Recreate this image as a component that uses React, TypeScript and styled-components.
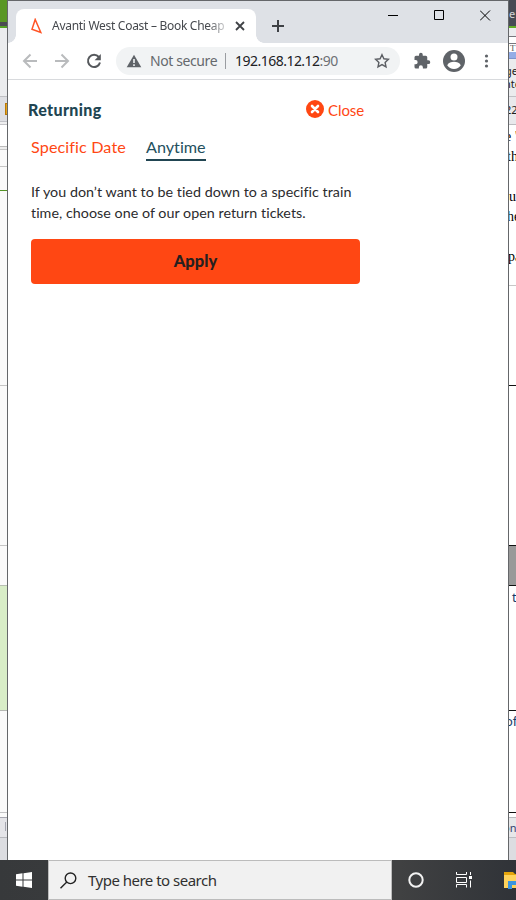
import React from "react";
import styled, { createGlobalStyle } from "styled-components";

const GlobalStyle = createGlobalStyle`
  *, *::before, *::after { box-sizing: border-box; }
  body { margin: 0; overflow: hidden; background: #fff; }
  button { border: 0; padding: 0; background: none; font: inherit; color: inherit; }
  svg { display: block; flex: none; }
`;

const ui = `"Noto Sans", "Open Sans", sans-serif`;
const brand = `Lato, sans-serif`;

const Screen = styled.div`
  width: 516px;
  height: 900px;
  display: flex;
  flex-direction: column;
  overflow: hidden;
`;

const Desktop = styled.div`
  display: grid;
  grid-template-columns: 7px 502px 7px;
  height: 860px;
`;

const Strip = styled.div`
  display: flex;
  flex-direction: column;
  overflow: hidden;
`;

const Band = styled.div<{ $h: number; $bg: string; $line?: string }>`
  flex: none;
  height: ${(p) => p.$h}px;
  background: ${(p) => p.$bg};
  border-bottom: ${(p) => (p.$line ? `1px solid ${p.$line}` : "0")};
  overflow: hidden;
`;

const Scrap = styled.div<{
  $top: number;
  $left: number;
  $size?: number;
  $serif?: boolean;
  $color?: string;
}>`
  height: 12px;
  margin-top: ${(p) => p.$top}px;
  margin-left: ${(p) => p.$left}px;
  font: ${(p) => p.$size ?? 11}px / 12px ${(p) => (p.$serif ? `"Liberation Serif", serif` : ui)};
  color: ${(p) => p.$color ?? "#222"};
  white-space: nowrap;
`;

const FolderTab = styled.div`
  width: 3px;
  height: 12px;
  margin: 6px 0 0 5px;
  background: #e6a51c;
  border: 1px solid #b97908;
  border-right: 0;
`;

const StatusTick = styled.div`
  width: 1px;
  height: 9px;
  margin: 4px 0 0 5px;
  background: #a5a6b0;
`;

const Window = styled.div`
  border: 1px solid #65676a;
  border-bottom: 0;
  background: #fff;
  display: flex;
  flex-direction: column;
`;

const TitleBar = styled.div`
  height: 42px;
  background: #dee1e6;
  display: flex;
  padding-left: 8px;
`;

const Tab = styled.div`
  position: relative;
  width: 240px;
  height: 34px;
  margin-top: 8px;
  border-radius: 8px 8px 0 0;
  background: #fff;
  display: flex;
  align-items: center;
  padding: 0 10px 0 15px;

  &::before,
  &::after {
    content: "";
    position: absolute;
    bottom: 0;
    width: 8px;
    height: 8px;
  }
  &::before {
    left: -8px;
    background: radial-gradient(circle at 0 0, transparent 7.5px, #fff 8px);
  }
  &::after {
    right: -8px;
    background: radial-gradient(circle at 100% 0, transparent 7.5px, #fff 8px);
  }
`;

const TabTitle = styled.div`
  width: 173px;
  margin-left: 9px;
  margin-right: 10px;
  overflow: hidden;
  white-space: nowrap;
  font: 12px/20px ${ui};
  letter-spacing: -0.29px;
  color: #45484d;
  mask-image: linear-gradient(90deg, #000 156px, rgba(0, 0, 0, 0.2) 174px);
`;

const NewTab = styled.button`
  width: 12px;
  height: 12px;
  margin: 19px 0 0 16px;
`;

const Controls = styled.div`
  display: flex;
  gap: 35px;
  margin: 9px 0 0 104px;
`;

const Toolbar = styled.div`
  height: 37px;
  border-bottom: 1px solid #d8dadd;
  display: flex;
  align-items: center;
  padding: 0 14px;
`;

const NavButtons = styled.div`
  display: flex;
  gap: 16px;
  margin-right: 13px;
`;

const Address = styled.div`
  width: 284px;
  height: 28px;
  border-radius: 14px;
  background: #f1f3f4;
  display: flex;
  align-items: center;
  padding: 0 10px;
  font: 14px/28px ${ui};
`;

const NotSecure = styled.span`
  width: 75px;
  margin-left: 8px;
  color: #66696d;
  letter-spacing: -0.4px;
  white-space: nowrap;
`;

const Divider = styled.span`
  width: 1px;
  height: 16px;
  background: #9a9da1;
`;

const Url = styled.span`
  width: 139px;
  margin-left: 9px;
  color: #202124;
  letter-spacing: -0.52px;
`;

const Port = styled.span`
  color: #6d7074;
`;

const ToolbarActions = styled.div`
  display: flex;
  align-items: center;
  gap: 12px;
  margin-left: 13px;
`;

const Page = styled.main`
  width: 375px;
  padding: 19px 19px 0 20px;
  font-family: ${brand};
  font-variant-ligatures: none;
`;

const PageHeader = styled.header`
  display: flex;
  justify-content: space-between;
  height: 22px;
`;

const Heading = styled.h1`
  margin: 0;
  font-weight: 900;
  font-size: 16px;
  line-height: 22px;
  letter-spacing: 0.36px;
  color: #214552;
`;

const CloseButton = styled.button`
  display: flex;
  gap: 4px;
  height: 20px;
  margin-top: 1px;
  color: #ff4713;
  font-family: ${brand};
  font-size: 15px;
  letter-spacing: -0.1px;
  line-height: 20px;
`;

const Tabs = styled.nav`
  display: flex;
  gap: 19px;
  margin: 15px 0 0 3px;
`;

const TabLink = styled.button<{ $active?: boolean; $w: number }>`
  width: ${(p) => p.$w}px;
  height: 25px;
  font-family: ${brand};
  font-size: 16.2px;
  line-height: 21px;
  display: flex;
  align-items: flex-start;
  letter-spacing: ${(p) => (p.$active ? 0 : 0.1)}px;
  white-space: nowrap;
  color: ${(p) => (p.$active ? "#24505e" : "#ff4713")};
  border-bottom: ${(p) => (p.$active ? "2px solid #214552" : "0")};
`;

const Copy = styled.p`
  margin: 20px 0 0 3px;
  font-size: 14.3px;
  line-height: 21px;
  color: #2b2b2d;
  white-space: nowrap;
`;

const Line = styled.span`
  display: block;
  letter-spacing: 0.025px;
`;

const Apply = styled.button`
  width: 329px;
  height: 45px;
  margin: 16px 0 0 3px;
  border-radius: 4px;
  background: #ff4713;
  color: #25201f;
  font: 900 16.5px/45px ${brand};
`;

const Taskbar = styled.div`
  height: 40px;
  background: linear-gradient(90deg, #37393b 0, #404142 400px, #303338 516px);
  display: flex;
  overflow: hidden;
`;

const StartButton = styled.button`
  flex: none;
  width: 48px;
  height: 40px;
  display: grid;
  place-items: center;
`;

const Search = styled.div`
  flex: none;
  width: 344px;
  height: 40px;
  border: 1px solid #bcbcbc;
  background: #f1f1f1;
  display: flex;
  align-items: center;
  gap: 11px;
  padding-left: 11px;
  font: 15px/38px ${ui};
  letter-spacing: -0.51px;
  color: #303030;
`;

const TaskIcons = styled.div`
  flex: none;
  display: flex;
  align-items: center;
  margin-left: 16px;
`;

type BandData = [number, string, string?, React.ReactNode?];

const leftBands: BandData[] = [
  [22, "#599724"],
  [4, "#4b4c51"],
  [2, "#54a225"],
  [69, "#ebecee", "#bfc0c4"],
  [25, "#dedfe3", "#c1c2c8", <FolderTab key="f" />],
  [3, "#eeeeef", "#c4c4c8"],
  [22, "#fff", "#bbb"],
  [3, "#eee", "#c7c7c7"],
  [17, "#fafafa", "#c5c5c5"],
  [24, "#fafafa", "#549326"],
  [195, "#fafafa", "#c5c5c5"],
  [160, "#fafafa", "#c5c5c5"],
  [40, "#fafafa", "#b8bfb3"],
  [125, "#d8edc7", "#b5b8b3"],
  [102, "#fafafa", "#c2c2c4"],
  [5, "#fafafa", "#a7a7b1"],
  [20, "#e4e4e8", "#b7b8bd", <StatusTick key="s" />],
  [22, "#dcdde1"],
];

const rightBands: BandData[] = [
  [26, "#474b54", undefined, <Scrap key="a" $top={8} $left={0} $color="#d3d4d7">e</Scrap>],
  [2, "#62ad26"],
  [9, "#ebecee", "#77777d"],
  [7, "#fff", "#77777d"],
  [8, "#fff", undefined, <Scrap key="b" $top={-2} $left={1} $size={9} $serif $color="#555">T</Scrap>],
  [7, "#94ade6", "#7d94cd"],
  [
    38,
    "#ebecee",
    "#bfc0c4",
    <React.Fragment key="c">
      <Scrap $top={6} $left={-4}>ge</Scrap>
      <Scrap $top={1} $left={-5}>nte</Scrap>
    </React.Fragment>,
  ],
  [28, "#e9e9ec", "#bcbcc0", <Scrap key="d" $top={7} $left={-4}>22</Scrap>],
  [
    161,
    "#fff",
    "#c7c7c7",
    <React.Fragment key="e">
      <Scrap $top={6} $left={-4} $size={14} $serif $color="#000">e "</Scrap>
      <Scrap $top={8} $left={-2} $size={14} $serif $color="#000">th</Scrap>
      <Scrap $top={28} $left={0} $size={14} $serif $color="#000">u</Scrap>
      <Scrap $top={8} $left={-2} $size={14} $serif $color="#000">he</Scrap>
      <Scrap $top={28} $left={-1} $size={14} $serif $color="#000">pa</Scrap>
    </React.Fragment>,
  ],
  [100, "#fff", "#111"],
  [160, "#fff", "#111"],
  [40, "#999", "#111"],
  [125, "#fff", "#111", <Scrap key="g" $top={5} $left={3} $size={13} $color="#143c6b">t</Scrap>],
  [102, "#fff", "#111", <Scrap key="h" $top={4} $left={-4} $size={13} $color="#143c6b">of</Scrap>],
  [5, "#fff", "#b9b9bd"],
  [20, "#e7e7e9", "#bdbdc2", <Scrap key="i" $top={4} $left={-6} $color="#34406d">on</Scrap>],
  [22, "#dcdde1"],
];

const renderBands = (bands: BandData[]) =>
  bands.map(([h, bg, line, content], i) => (
    <Band key={i} $h={h} $bg={bg} $line={line}>
      {content}
    </Band>
  ));

export default function App() {
  return (
    <Screen>
      <GlobalStyle />
      <Desktop>
        <Strip>{renderBands(leftBands)}</Strip>
        <Window>
          <TitleBar>
            <Tab>
              <svg width="12" height="16" viewBox="0 0 12 16" fill="none" stroke="#ff5426" strokeWidth="1.5">
                <path d="M4.200 1.500 9.800 14.500 1 11.300Z" />
              </svg>
              <TabTitle>Avanti West Coast – Book Cheap</TabTitle>
              <svg width="10" height="10" viewBox="0 0 10 10" stroke="#3f4246" strokeWidth="1.8">
                <path d="m1 1 8 8M9 1 1 9" />
              </svg>
            </Tab>
            <NewTab aria-label="New tab">
              <svg width="12" height="12" viewBox="0 0 12 12" stroke="#3e4145" strokeWidth="2">
                <path d="M6 0v12M0 6h12" />
              </svg>
            </NewTab>
            <Controls>
              <svg width="11" height="11" viewBox="0 0 11 11" stroke="#000"><path d="M0 5.500h10" /></svg>
              <svg width="11" height="11" viewBox="0 0 11 11" fill="none" stroke="#000"><path d="M.5.5h9v9h-9Z" /></svg>
              <svg width="11" height="11" viewBox="0 0 11 11" stroke="#000"><path d="m0 .5 10 10M10 .5l-10 10" /></svg>
            </Controls>
          </TitleBar>
          <Toolbar>
            <NavButtons>
              <svg width="16" height="16" viewBox="0 0 16 16" fill="none" stroke="#b9bbbd" strokeWidth="2">
                <path d="M15 8H2M8.500 1.500 2 8l6.500 6.500" />
              </svg>
              <svg width="16" height="16" viewBox="0 0 16 16" fill="none" stroke="#b9bbbd" strokeWidth="2">
                <path d="M1 8h13M7.500 1.500 14 8l-6.500 6.500" />
              </svg>
              <svg width="17" height="16" viewBox="0 0 17 16" fill="none">
                <path d="M12.800 4A6.100 6.100 0 1 0 14 9.500" stroke="#55585c" strokeWidth="2" />
                <path d="M14.800 1v6.200H8.600Z" fill="#55585c" />
              </svg>
            </NavButtons>
            <Address>
              <svg width="16" height="14" viewBox="0 0 16 14">
                <path d="M8 .7 15.300 13.300H.7Z" fill="#5f6368" />
                <path d="M8 5v4M8 10.200v1.700" stroke="#f1f3f4" strokeWidth="1.600" />
              </svg>
              <NotSecure>Not secure</NotSecure>
              <Divider />
              <Url>192.168.12.12<Port>:90</Port></Url>
              <svg width="16" height="16" viewBox="0 0 16 16" fill="none" stroke="#5b5e63" strokeWidth="1.400">
                <path d="m8 1.700 1.900 4.100 4.500.5-3.300 3.100.9 4.500L8 11.600l-4 2.300.9-4.500-3.300-3.100 4.500-.5Z" />
              </svg>
            </Address>
            <ToolbarActions>
              <svg width="18" height="18" viewBox="0 0 24 24" fill="#5f6368">
                <path d="M20.500 11H19V7a2 2 0 0 0-2-2h-4V3.500a2.500 2.500 0 0 0-5 0V5H4a2 2 0 0 0-2 2v3.800h1.500a2.700 2.700 0 0 1 0 5.400H2V20a2 2 0 0 0 2 2h3.800v-1.500a2.700 2.700 0 0 1 5.400 0V22H17a2 2 0 0 0 2-2v-4h1.500a2.500 2.500 0 0 0 0-5Z" />
              </svg>
              <svg width="22" height="22" viewBox="0 0 22 22">
                <circle cx="11" cy="11" r="11" fill="#5f6368" />
                <circle cx="11" cy="7" r="3.500" fill="#fff" />
                <path d="M4.200 15.200c1.200-2.400 4.200-3.400 6.800-3.400s5.600 1 6.800 3.400a7.900 7.900 0 0 1-13.600 0Z" fill="#fff" />
              </svg>
              <svg width="18" height="16" viewBox="0 0 18 16" fill="#5f6368">
                <circle cx="9.500" cy="3" r="1.600" />
                <circle cx="9.500" cy="8" r="1.600" />
                <circle cx="9.500" cy="13" r="1.600" />
              </svg>
            </ToolbarActions>
          </Toolbar>
          <Page>
            <PageHeader>
              <Heading>Returning</Heading>
              <CloseButton>
                <svg width="18" height="18" viewBox="0 0 18 18">
                  <circle cx="9" cy="9" r="9" fill="#ff4713" />
                  <path d="m6 6 6 6M12 6l-6 6" stroke="#fff" strokeWidth="2.600" strokeLinecap="round" />
                </svg>
                Close
              </CloseButton>
            </PageHeader>
            <Tabs>
              <TabLink $w={96}>Specific Date</TabLink>
              <TabLink $w={60} $active>Anytime</TabLink>
            </Tabs>
            <Copy>
              <Line>If you don’t want to be tied down to a specific train</Line>
              <Line>time, choose one of our open return tickets.</Line>
            </Copy>
            <Apply>Apply</Apply>
          </Page>
        </Window>
        <Strip>{renderBands(rightBands)}</Strip>
      </Desktop>
      <Taskbar>
        <StartButton aria-label="Start">
          <svg width="16" height="16" viewBox="0 0 16 16" fill="#fff">
            <path d="M0 2.200 6.500 1.300v6.200H0ZM7.500 1.200 16 0v7.500H7.500ZM0 8.500h6.500v6.200L0 13.800ZM7.500 8.500H16V16l-8.500-1.200Z" />
          </svg>
        </StartButton>
        <Search>
          <svg width="17" height="17" viewBox="0 0 17 17" fill="none" stroke="#222" strokeWidth="1.400">
            <circle cx="10.500" cy="6.300" r="5.300" />
            <path d="m6.800 10-6.300 6.300" />
          </svg>
          Type here to search
        </Search>
        <TaskIcons>
          <svg width="16" height="16" viewBox="0 0 16 16" fill="none" stroke="#f2f2f2" strokeWidth="2">
            <circle cx="8" cy="8" r="6.700" />
          </svg>
          <svg width="80" height="16" viewBox="-32 0 80 16" fill="none" stroke="#fff" strokeWidth="1">
            <path d="M.5 0v2.500h10V0M.5 5.500h10v5h-10ZM.5 15.500v-3h10v3M14.500 0v3M14.500 8.500v7" />
            <path d="M13 4h3v3h-3Z" fill="#fff" stroke="none" />
          </svg>
          <svg width="20" height="18" viewBox="0 0 20 18">
            <path d="M0 1h9l2 2h9v14H0Z" fill="#e5a50b" />
            <path d="M0 4h20v13H0Z" fill="#ffd35c" />
            <path d="M4 18v-8h12v8h-4v-4H8v4Z" fill="#3b94df" />
          </svg>
        </TaskIcons>
      </Taskbar>
    </Screen>
  );
}
